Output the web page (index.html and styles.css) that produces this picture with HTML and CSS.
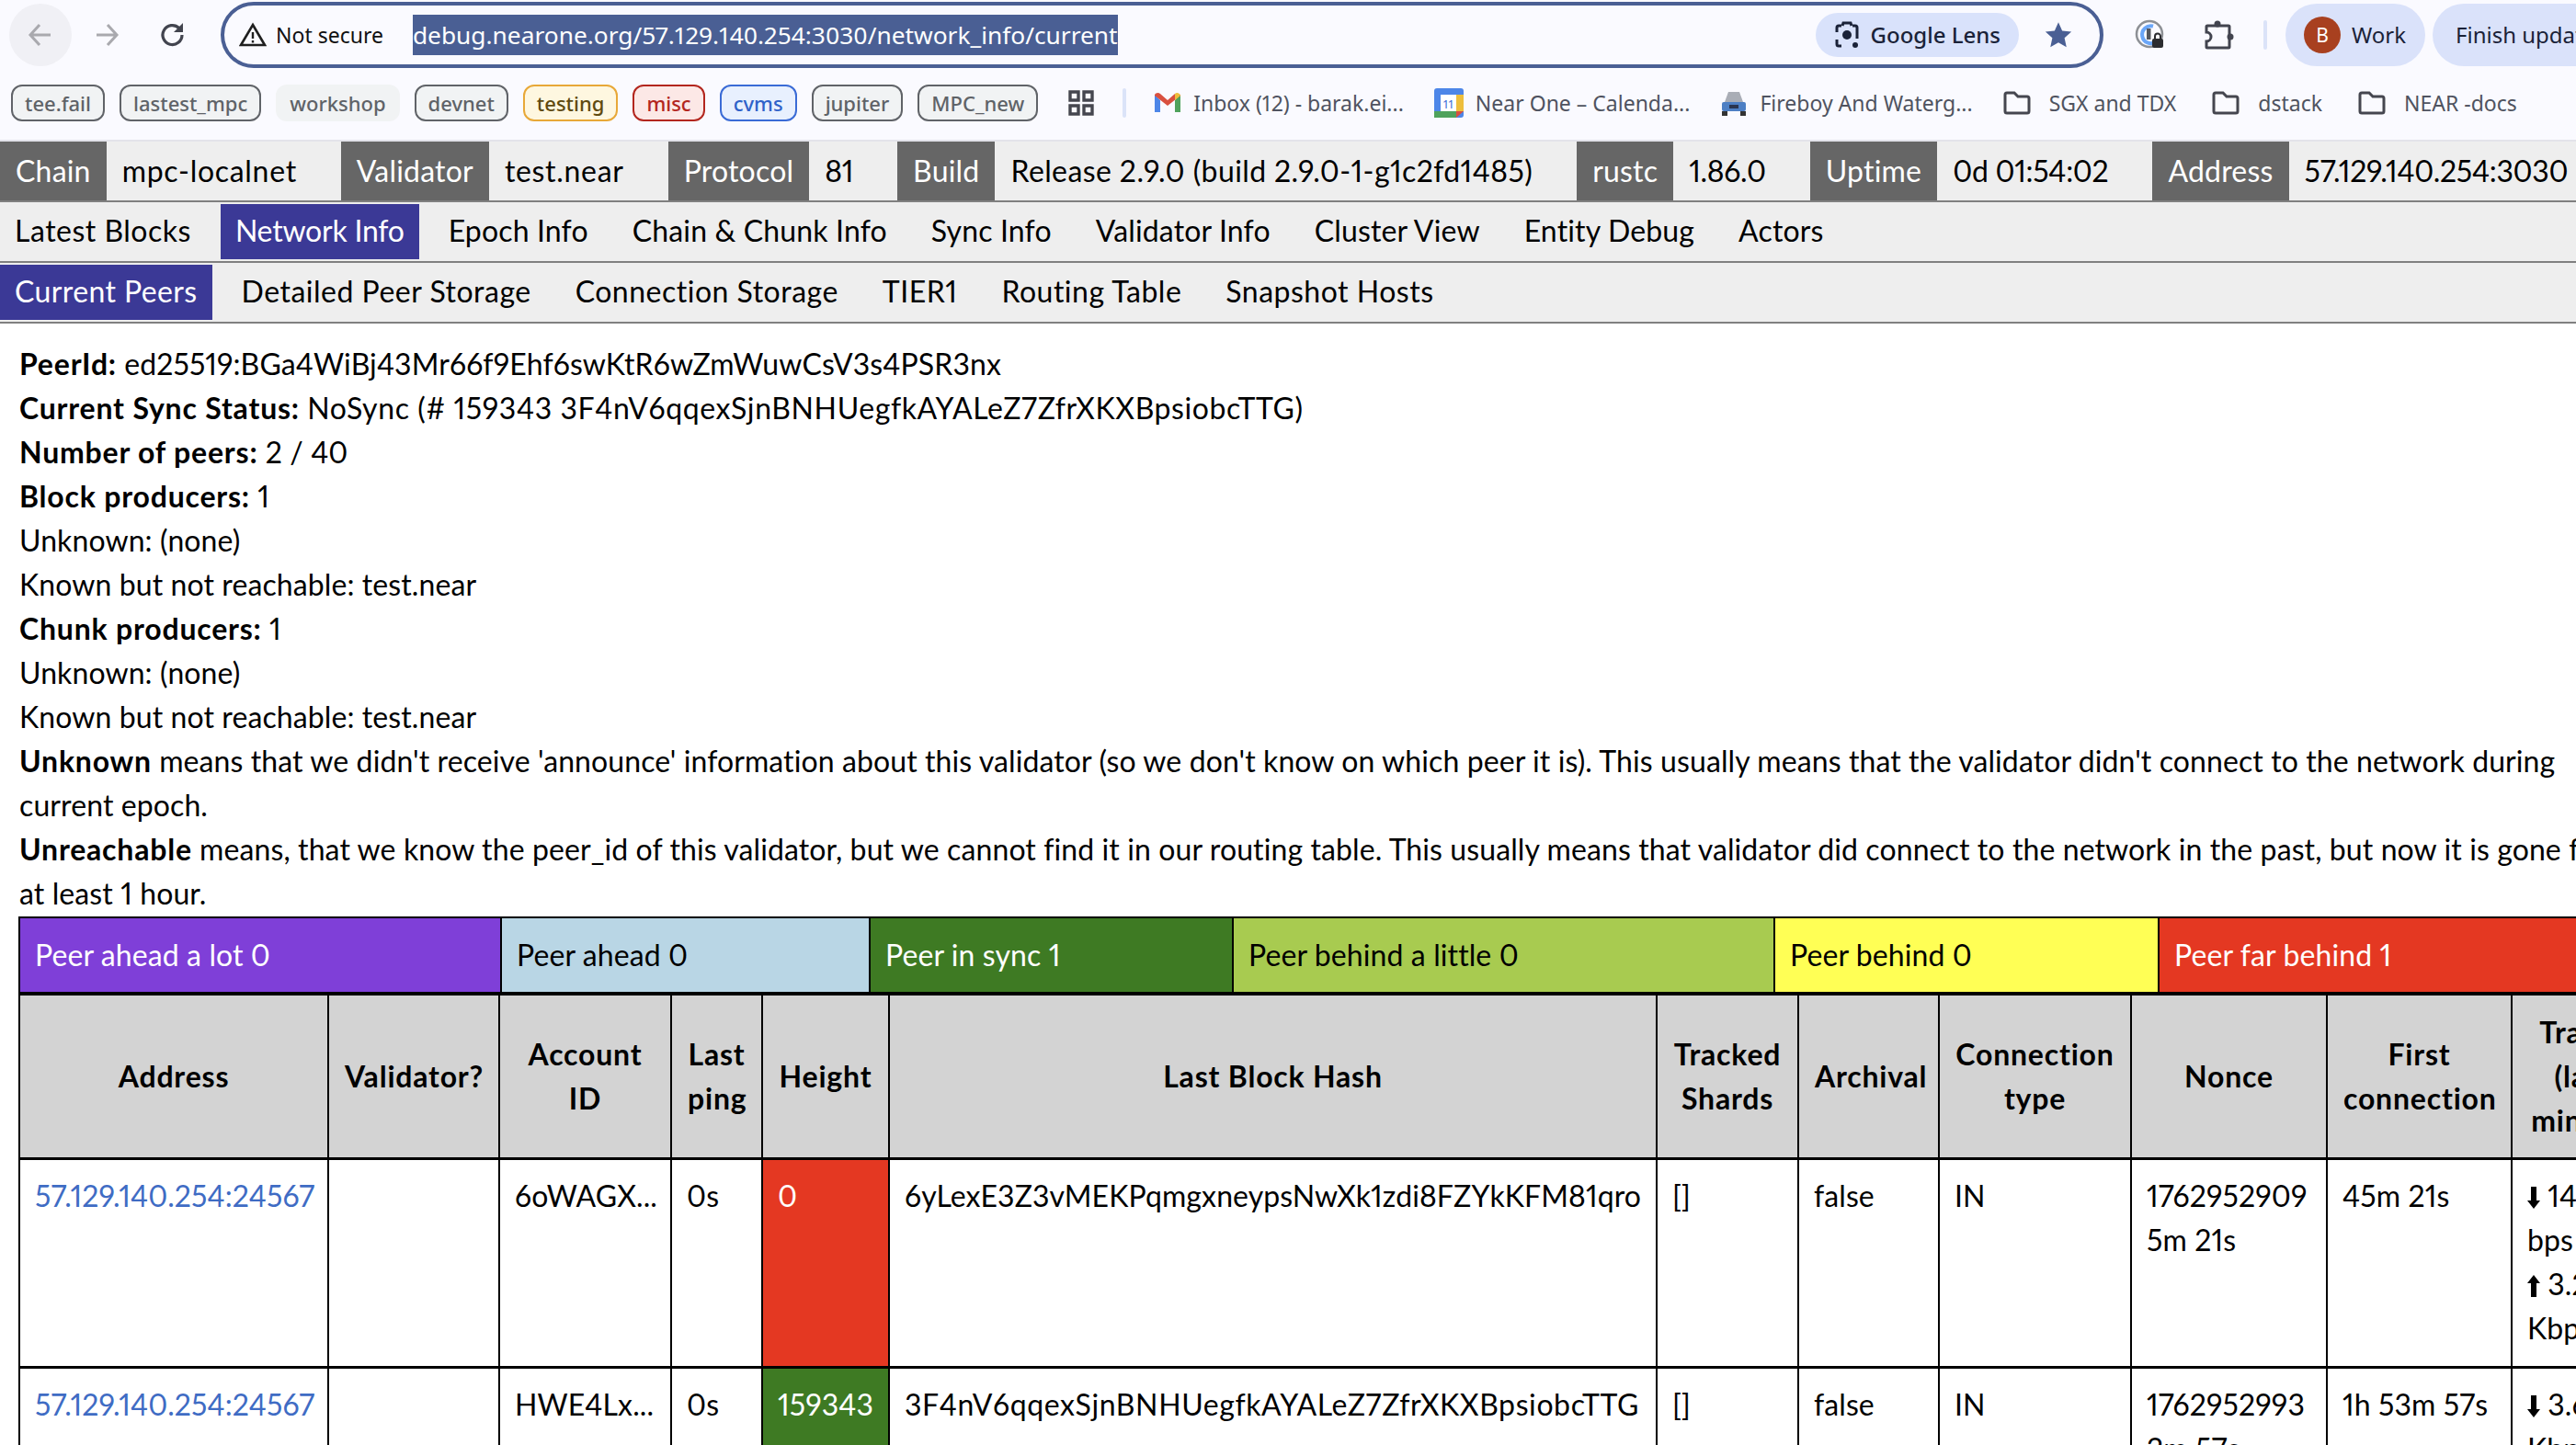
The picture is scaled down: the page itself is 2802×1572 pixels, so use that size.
FILE: index.html
```html
<!DOCTYPE html>
<html>
<head>
  <link rel="stylesheet" href="styles.css">
</head>
<body>
  <div class="chrome">
    <div class="toolbar">
      <div class="nav-btn back">
        <svg width="28" height="28" viewBox="0 0 28 28"><path d="M25 14H4M13 3 3 14l10 11" fill="none" stroke="#a9a9ae" stroke-width="3"/></svg>
      </div>
      <div class="nav-btn">
        <svg width="28" height="28" viewBox="0 0 28 28"><path d="M3 14h21M15 3l10 11-10 11" fill="none" stroke="#a9a9ae" stroke-width="3"/></svg>
      </div>
      <div class="nav-btn">
        <svg width="30" height="30" viewBox="0 0 30 30"><path d="M25 15a10.500 10.500 0 1 1-3.200-7.500L25 10" fill="none" stroke="#42444f" stroke-width="3.200"/><path d="M26 2v10H16z" fill="#42444f"/></svg>
      </div>
      <div class="omnibox">
        <svg class="warn" width="30" height="28" viewBox="0 0 30 28"><path d="M15 3 28 25H2z" fill="none" stroke="#1f1f1f" stroke-width="2.600"/><path d="M15 11v7M15 20v2.500" stroke="#1f1f1f" stroke-width="2.400"/></svg>
        <span class="not-secure">Not secure</span>
        <span class="url">debug.nearone.org/57.129.140.254:3030/network_info/current</span>
        <span class="lens">
          <svg width="28" height="32" viewBox="0 0 28 32"><path d="M8 6H5a2 2 0 0 0-2 2v5M3 21v5a2 2 0 0 0 2 2h3M20 6h3a2 2 0 0 1 2 2v12M9 6l1-3h8l1 3" fill="none" stroke="#1a2238" stroke-width="3"/><circle cx="14" cy="16" r="5" fill="#1a2238"/><circle cx="23" cy="27" r="3" fill="#1a2238"/></svg>
          Google Lens
        </span>
        <svg class="star" width="30" height="30" viewBox="0 0 24 24"><path d="m12 1 3.300 7.400 8 .8-6 5.400 1.700 7.900-7-4-7 4 1.700-7.900-6-5.400 8-.8z" fill="#4a5f94"/></svg>
      </div>
      <div class="tool-icon">
        <svg width="34" height="34" viewBox="0 0 34 34"><circle cx="16" cy="16" r="14" fill="none" stroke="#8d9095" stroke-width="2.500"/><path d="M20 7.500a9.500 9.500 0 1 0 3 17" fill="none" stroke="#6aa6f8" stroke-width="4"/><rect x="13" y="10" width="4.500" height="12" fill="#55585f"/><rect x="19" y="21" width="12" height="10" rx="2" fill="#2b2c30"/><path d="M22 21v-2.500a3 3 0 0 1 6 0V21" fill="none" stroke="#2b2c30" stroke-width="2"/></svg>
      </div>
      <div class="tool-icon">
        <svg width="34" height="34" viewBox="0 0 34 34"><path d="M5 7h23a1 1 0 0 1 1 1v22a1 1 0 0 1-1 1H5a1 1 0 0 1-1-1v-6a5 5 0 0 0 0-10V8a1 1 0 0 1 1-1z" fill="none" stroke="#42444f" stroke-width="3"/><circle cx="16" cy="5" r="3.500" fill="#42444f"/><circle cx="30" cy="19" r="3.500" fill="#42444f"/></svg>
      </div>
      <div class="tool-sep"></div>
      <div class="pill work"><span class="avatar">B</span>Work</div>
      <div class="pill finish">Finish update</div>
    </div>
    <div class="bookmarks">
      <span class="chip">tee.fail</span>
      <span class="chip">lastest_mpc</span>
      <span class="chip plain">workshop</span>
      <span class="chip">devnet</span>
      <span class="chip yellow">testing</span>
      <span class="chip red">misc</span>
      <span class="chip blue">cvms</span>
      <span class="chip">jupiter</span>
      <span class="chip">MPC_new</span>
      <svg class="apps" width="30" height="30" viewBox="0 0 30 30"><path d="M3 3h9v9H3zM18 3h9v9h-9zM3 18h9v9H3zM18 18h9v9h-9z" fill="none" stroke="#45464f" stroke-width="3.400"/></svg>
      <span class="bm-sep"></span>
      <span class="bm">
        <svg width="30" height="24" viewBox="0 0 30 24"><path d="M1 3v19h6V9z" fill="#4d86e8"/><path d="M29 3v19h-6V9z" fill="#4fa25c"/><path d="M1 3c1-2 4-3 6-1l8 7 8-7 6 1v1L15 15 1 4z" fill="#d9503f"/><path d="M23 2c2-2 5-1 6 2l-6 5z" fill="#edbe3c"/></svg>
        <span>Inbox (12) - barak.ei...</span>
      </span>
      <span class="bm">
        <svg width="32" height="32" viewBox="0 0 32 32"><rect width="32" height="32" rx="3" fill="#4d86e8"/><rect x="24" y="7" width="8" height="18" fill="#edbe3c"/><rect y="25" width="24" height="7" fill="#4fa25c"/><path d="M24 25h8l-8 7z" fill="#d9503f"/><rect x="7" y="7" width="17" height="18" fill="#fff"/><text x="15.500" y="22" class="cal-num">11</text></svg>
        <span>Near One – Calenda...</span>
      </span>
      <span class="bm">
        <svg width="30" height="30" viewBox="0 0 30 30"><path d="M9 3h12l4 11H5z" fill="#a9adb6"/><rect x="2" y="14" width="26" height="10" rx="2" fill="#4d7fc4"/><rect x="2" y="24" width="6" height="5" fill="#333"/><rect x="22" y="24" width="6" height="5" fill="#333"/><rect x="10" y="17" width="10" height="4" fill="#2a3550"/></svg>
        <span>Fireboy And Waterg...</span>
      </span>
      <span class="bm folder">
        <svg width="30" height="26" viewBox="0 0 30 26"><path d="M2 4a2 2 0 0 1 2-2h8l4 4h10a2 2 0 0 1 2 2v14a2 2 0 0 1-2 2H4a2 2 0 0 1-2-2z" fill="none" stroke="#45464f" stroke-width="3"/></svg>
        <span>SGX and TDX</span>
      </span>
      <span class="bm folder">
        <svg width="30" height="26" viewBox="0 0 30 26"><path d="M2 4a2 2 0 0 1 2-2h8l4 4h10a2 2 0 0 1 2 2v14a2 2 0 0 1-2 2H4a2 2 0 0 1-2-2z" fill="none" stroke="#45464f" stroke-width="3"/></svg>
        <span>dstack</span>
      </span>
      <span class="bm folder">
        <svg width="30" height="26" viewBox="0 0 30 26"><path d="M2 4a2 2 0 0 1 2-2h8l4 4h10a2 2 0 0 1 2 2v14a2 2 0 0 1-2 2H4a2 2 0 0 1-2-2z" fill="none" stroke="#45464f" stroke-width="3"/></svg>
        <span>NEAR -docs</span>
      </span>
    </div>
  </div>

  <div class="status-bar">
    <div class="stat"><span class="stat-label">Chain</span><span class="stat-value">mpc-localnet</span></div>
    <div class="stat"><span class="stat-label">Validator</span><span class="stat-value">test.near</span></div>
    <div class="stat"><span class="stat-label">Protocol</span><span class="stat-value num">81</span></div>
    <div class="stat"><span class="stat-label">Build</span><span class="stat-value build">Release 2.9.0 (build 2.9.0-1-g1c2fd1485)</span></div>
    <div class="stat"><span class="stat-label">rustc</span><span class="stat-value num">1.86.0</span></div>
    <div class="stat"><span class="stat-label">Uptime</span><span class="stat-value num">0d 01:54:02</span></div>
    <div class="stat"><span class="stat-label">Address</span><span class="stat-value num">57.129.140.254:3030</span></div>
  </div>
  <div class="tabs primary">
    <a class="tab">Latest Blocks</a>
    <a class="tab active">Network Info</a>
    <a class="tab">Epoch Info</a>
    <a class="tab">Chain &amp; Chunk Info</a>
    <a class="tab">Sync Info</a>
    <a class="tab">Validator Info</a>
    <a class="tab">Cluster View</a>
    <a class="tab">Entity Debug</a>
    <a class="tab">Actors</a>
  </div>
  <div class="tabs">
    <a class="tab active">Current Peers</a>
    <a class="tab">Detailed Peer Storage</a>
    <a class="tab">Connection Storage</a>
    <a class="tab">TIER1</a>
    <a class="tab">Routing Table</a>
    <a class="tab">Snapshot Hosts</a>
  </div>

  <div class="content">
    <div class="info">
      <div><b>PeerId:</b> ed25519:BGa4WiBj43Mr66f9Ehf6swKtR6wZmWuwCsV3s4PSR3nx</div>
      <div><b>Current Sync Status:</b> <span class="hash">NoSync (# 159343 3F4nV6qqexSjnBNHUegfkAYALeZ7ZfrXKXBpsiobcTTG)</span></div>
      <div><b>Number of peers:</b> 2 / 40</div>
      <div><b>Block producers:</b> 1</div>
      <div>Unknown: (none)</div>
      <div>Known but not reachable: test.near</div>
      <div><b>Chunk producers:</b> 1</div>
      <div>Unknown: (none)</div>
      <div>Known but not reachable: test.near</div>
      <div><b>Unknown</b> means that we didn't receive 'announce' information about this validator (so we don't know on which peer it is). This usually means that the validator didn't connect to the network during current epoch.</div>
      <div><b>Unreachable</b> means, that we know the peer_id of this validator, but we cannot find it in our routing table. This usually means that validator did connect to the network in the past, but now it is gone for at least 1 hour.</div>
    </div>

    <div class="legend">
      <div class="legend-item ahead-lot">Peer ahead a lot 0</div>
      <div class="legend-item ahead">Peer ahead 0</div>
      <div class="legend-item in-sync">Peer in sync 1</div>
      <div class="legend-item behind-little">Peer behind a little 0</div>
      <div class="legend-item behind">Peer behind 0</div>
      <div class="legend-item far-behind">Peer far behind 1</div>
    </div>

    <table class="peers">
      <colgroup>
        <col class="c-addr"><col class="c-val"><col class="c-acct"><col class="c-ping"><col class="c-height"><col class="c-hash"><col class="c-shards"><col class="c-arch"><col class="c-conn"><col class="c-nonce"><col class="c-first"><col class="c-traffic">
      </colgroup>
      <thead>
        <tr>
          <th>Address</th>
          <th>Validator?</th>
          <th>Account ID</th>
          <th>Last ping</th>
          <th>Height</th>
          <th>Last Block Hash</th>
          <th>Tracked Shards</th>
          <th>Archival</th>
          <th>Connection type</th>
          <th>Nonce</th>
          <th>First connection</th>
          <th>Traffic (last minute)</th>
        </tr>
      </thead>
      <tbody>
        <tr>
          <td><a class="peer-link">57.129.140.254:24567</a></td>
          <td></td>
          <td>6oWAGX...</td>
          <td>0s</td>
          <td class="far-behind">0</td>
          <td>6yLexE3Z3vMEKPqmgxneypsNwXk1zdi8FZYkKFM81qro</td>
          <td>[]</td>
          <td>false</td>
          <td>IN</td>
          <td>1762952909<br>5m 21s</td>
          <td>45m 21s</td>
          <td><svg class="arrow" width="14" height="24" viewBox="0 0 14 24"><path d="M4 0h6v15h4l-7 9-7-9h4z"/></svg> 14.6 bps<br><svg class="arrow" width="14" height="24" viewBox="0 0 14 24"><path d="M4 24h6V9h4L7 0 0 9h4z"/></svg> 3.2 Kbps</td>
        </tr>
        <tr>
          <td><a class="peer-link">57.129.140.254:24567</a></td>
          <td></td>
          <td>HWE4Lx...</td>
          <td>0s</td>
          <td class="in-sync">159343</td>
          <td><span class="hash">3F4nV6qqexSjnBNHUegfkAYALeZ7ZfrXKXBpsiobcTTG</span></td>
          <td>[]</td>
          <td>false</td>
          <td>IN</td>
          <td>1762952993<br>2m 57s</td>
          <td>1h 53m 57s</td>
          <td><svg class="arrow" width="14" height="24" viewBox="0 0 14 24"><path d="M4 0h6v15h4l-7 9-7-9h4z"/></svg> 3.6 Kbps<br><svg class="arrow" width="14" height="24" viewBox="0 0 14 24"><path d="M4 24h6V9h4L7 0 0 9h4z"/></svg> 3.1 Kbps</td>
        </tr>
      </tbody>
    </table>
  </div>
</body>
</html>
```

FILE: styles.css
```css
html, body {
  margin: 0;
  height: 100%;
  overflow: hidden;
}
body {
  font-family: Lato, sans-serif;
  font-size: 32px;
  line-height: 48px;
  font-variant-numeric: proportional-nums;
  letter-spacing: 0.1px;
  color: #000;
  background: #fff;
}
b, th {
  letter-spacing: 0.8px;
}
.hash {
  letter-spacing: 0.6px;
}

/* browser chrome */
.chrome {
  height: 152px;
  background: #fafaff;
  border-bottom: 2px solid #e3e3ea;
  font-family: "Noto Sans", sans-serif;
  line-height: 1;
  letter-spacing: 0;
  overflow: hidden;
}
.toolbar {
  display: flex;
  align-items: center;
  height: 68px;
  padding: 4px 0 4px 10px;
}
.nav-btn {
  flex: none;
  width: 68px;
  height: 68px;
  margin-right: 4px;
  border-radius: 50%;
  display: flex;
  align-items: center;
  justify-content: center;
}
.nav-btn.back {
  background: #f0f0f5;
}
.omnibox {
  flex: none;
  box-sizing: border-box;
  width: 2048px;
  height: 72px;
  margin-left: 14px;
  padding: 0 30px 0 16px;
  border: 4px solid #4a5f94;
  border-radius: 36px;
  display: flex;
  align-items: center;
  font-size: 23px;
}
.warn {
  flex: none;
}
.not-secure {
  margin: 0 32px 0 10px;
  color: #111;
}
.url {
  background: #4a5f94;
  color: #fff;
  font-size: 26.3px;
  line-height: 44px;
  height: 44px;
}
.lens {
  margin-left: auto;
  height: 48px;
  padding: 0 20px 0 20px;
  border-radius: 24px;
  background: #d9e2fb;
  color: #1a2238;
  font-size: 24px;
  display: flex;
  align-items: center;
  gap: 12px;
  font-weight: 500;
}
.star {
  margin-left: 28px;
}
.tool-icon {
  flex: none;
  width: 34px;
  margin-left: 34px;
  display: flex;
}
.tool-icon + .tool-icon {
  margin-left: 40px;
}
.tool-sep {
  flex: none;
  width: 4px;
  height: 32px;
  margin: 0 20px 0 32px;
  border-radius: 2px;
  background: #dbe3f8;
}
.pill {
  flex: none;
  height: 68px;
  border-radius: 34px;
  background: #dae2fa;
  color: #1a2238;
  display: flex;
  align-items: center;
  font-size: 24px;
}
.work {
  width: 152px;
  box-sizing: border-box;
  padding-left: 20px;
  gap: 12px;
}
.avatar {
  width: 40px;
  height: 40px;
  border-radius: 50%;
  background: #a8401f;
  color: #fff;
  font-size: 21px;
  display: flex;
  align-items: center;
  justify-content: center;
}
.finish {
  margin-left: 8px;
  padding: 0 25px;
}

.bookmarks {
  display: flex;
  align-items: center;
  height: 40px;
  margin-top: 16px;
  padding-left: 12px;
  font-size: 23px;
  white-space: nowrap;
  color: #4f5360;
}
.chip {
  box-sizing: border-box;
  height: 40px;
  margin-right: 16px;
  padding: 0 13px;
  border: 2px solid #606368;
  border-radius: 12px;
  background: #f1f3f4;
  color: #5f6368;
  font-weight: 500;
  font-size: 22px;
  display: flex;
  align-items: center;
}
.chip.plain {
  border-color: #f1f3f4;
}
.chip.yellow {
  border-color: #e8a838;
  background: #fef7e0;
  color: #5f4a10;
}
.chip.red {
  border-color: #b3261e;
  background: #fce8e6;
  color: #b3261e;
}
.chip.blue {
  border-color: #3a6bd6;
  background: #e8f0fe;
  color: #2f62c9;
}
.apps {
  margin-left: 16px;
}
.bm-sep {
  width: 4px;
  height: 32px;
  margin: 0 30px;
  border-radius: 2px;
  background: #dbe3f8;
}
.bm {
  display: flex;
  align-items: center;
  gap: 13px;
  margin-right: 33px;
}
.bm.folder {
  gap: 20px;
  margin-right: 39px;
}
.cal-num {
  font-size: 13px;
  text-anchor: middle;
  fill: #3a6bd6;
}

/* debug page header */
.status-bar,
.tabs {
  display: flex;
  background: #eee;
  white-space: nowrap;
}
.status-bar {
  height: 64px;
  gap: 31px;
  border-bottom: 2px solid #808080;
  line-height: 64px;
}
.stat {
  display: flex;
}
.stat-label {
  padding: 0 17px;
  background: #666;
  color: #fff;
  letter-spacing: 0.2px;
}
.stat-value {
  padding: 0 17px;
  letter-spacing: 0.7px;
}
.stat-value.build {
  letter-spacing: 0.4px;
}
.stat-value.num {
  letter-spacing: -0.3px;
}
.tabs {
  box-sizing: border-box;
  height: 66px;
  padding: 2px 0;
  gap: 16px;
  border-bottom: 2px solid #808080;
  letter-spacing: 0.5px;
}
.tabs.primary {
  letter-spacing: 0.15px;
}
.tab {
  height: 60px;
  padding: 0 16px;
  line-height: 58px;
}
.tab.active {
  background: #3b3996;
  color: #fff;
  letter-spacing: 0.4px;
}
.tabs.primary .tab:first-child {
  letter-spacing: 0.5px;
}
.tabs.primary .tab.active {
  letter-spacing: -0.23px;
}

.content {
  padding: 20px 0 0 21px;
}
.info {
  width: 2835px;
}

/* peer sync colours, used by both the legend and the height column */
.ahead-lot { background: #7f3fd8; color: #fff; }
.ahead { background: #b9d6e5; }
.in-sync { background: #3e7a23; color: #fff; }
.behind-little { background: #a8cb50; }
.behind { background: #ffff55; }
.far-behind { background: #e43822; color: #fff; }

.legend {
  display: flex;
  box-sizing: border-box;
  width: 2860px;
  margin-left: -1px;
  height: 86px;
  border: solid #000;
  border-width: 2px 2px 4px;
  margin-top: 1px;
}
.legend-item {
  box-sizing: border-box;
  padding: 0 16px;
  line-height: 80px;
  border-left: 2px solid #000;
}
.legend-item:first-child {
  width: 522px;
  border-left: 0;
}
.legend-item:nth-child(2) { width: 401px; }
.legend-item:nth-child(3) { width: 395px; }
.legend-item:nth-child(4) { width: 589px; }
.legend-item:nth-child(5) { width: 418px; }
.legend-item:nth-child(6) { flex: 1; }

.peers {
  table-layout: fixed;
  width: 2867px;
  margin-left: -1px;
  border-collapse: collapse;
}
.c-addr { width: 336px; }
.c-val { width: 186px; }
.c-acct { width: 187px; }
.c-ping { width: 99px; }
.c-height { width: 138px; }
.c-hash { width: 835px; }
.c-shards { width: 154px; }
.c-arch { width: 153px; }
.c-conn { width: 209px; }
.c-nonce { width: 213px; }
.c-first { width: 201px; }
.c-traffic { width: 156px; }
.peers th,
.peers td {
  padding: 16px 17px;
  border-left: 2px solid #000;
  border-right: 2px solid #000;
  border-bottom: 3px solid #000;
  vertical-align: top;
  overflow: hidden;
}
.peers td {
  padding: 15px 16px 17px;
}
.peers th {
  background: #d3d3d3;
  vertical-align: middle;
  font-weight: 700;
}
.peer-link {
  color: #3f6cc4;
}
.arrow {
  vertical-align: -2px;
}
```
